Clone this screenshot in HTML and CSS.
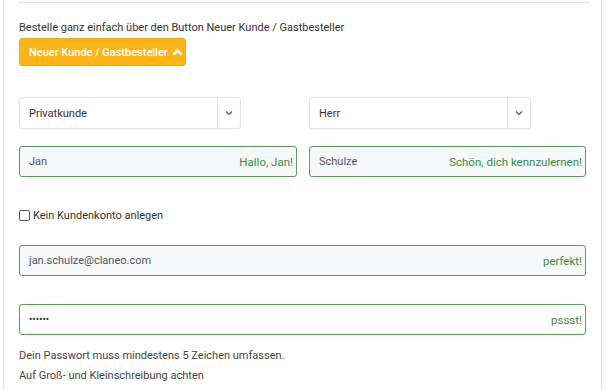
FILE: index.html
```html
<!DOCTYPE html>
<html lang="de">
<head>
    <meta charset="UTF-8">
    <title>Kasse</title>
<link rel="stylesheet" href="styles.css">
</head>
<body>
    <div class="panel">
        <hr class="top-line">
        <p class="intro">Bestelle ganz einfach über den Button Neuer Kunde / Gastbesteller</p>
        <button class="guest-btn" type="button">Neuer Kunde / Gastbesteller
            <svg width="11" height="8" viewBox="0 0 11 8"><path d="M1.5 6.5 L5.5 2.5 L9.5 6.5" fill="none" stroke="#fff" stroke-width="2.6"/></svg>
        </button>

        <div class="row selects">
            <div class="col">
                <div class="select">
                    <span class="select-value">Privatkunde</span>
                    <span class="select-arrow"><svg width="8" height="6" viewBox="0 0 8 6"><path d="M1 1.5 L4 4.5 L7 1.5" fill="none" stroke="#555" stroke-width="1.2"/></svg></span>
                </div>
            </div>
            <div class="col">
                <div class="select">
                    <span class="select-value">Herr</span>
                    <span class="select-arrow"><svg width="8" height="6" viewBox="0 0 8 6"><path d="M1 1.5 L4 4.5 L7 1.5" fill="none" stroke="#555" stroke-width="1.2"/></svg></span>
                </div>
            </div>
        </div>

        <div class="row names">
            <div class="col">
                <div class="field valid">
                    <span class="field-value">Jan</span>
                    <span class="field-hint">Hallo, Jan!</span>
                </div>
            </div>
            <div class="col">
                <div class="field valid">
                    <span class="field-value">Schulze</span>
                    <span class="field-hint">Schön, dich kennzulernen!</span>
                </div>
            </div>
        </div>

        <label class="check"><span class="box"></span>Kein Kundenkonto anlegen</label>

        <div class="field valid email">
            <span class="field-value">jan.schulze@claneo.com</span>
            <span class="field-hint">perfekt!</span>
        </div>

        <div class="field valid password">
            <span class="field-value dots">&bull;&bull;&bull;&bull;&bull;&bull;</span>
            <span class="field-hint">pssst!</span>
        </div>

        <p class="help">Dein Passwort muss mindestens 5 Zeichen umfassen.<br>Auf Groß- und Kleinschreibung achten</p>
    </div>
</body>
</html>
```

FILE: styles.css
```css
body{
    margin: 0;
    font-family: Roboto, "Liberation Sans", sans-serif;
    font-size: 11px;
    color: #333;
    background: #fff;
}
.panel{
    margin-left: 3px;
    width: 567px;
    padding: 2px 15px 10px 15px;
    border-left: 1px solid #e2e2e2;
    border-right: 1px solid #e2e2e2;
    height: 378px;
}
.top-line{
    margin: 0 -4px 0 -1px;
    border: 0;
    border-top: 1px solid #e4e4e4;
}
.intro{
    margin: 17px 0 0 0;
    line-height: 16px;
    color: #333;
}
.guest-btn{
    margin-top: 2px;
    height: 28px;
    width: 167px;
    padding: 0 0 0 9px;
    border: 1px solid #f0ab0a;
    border-radius: 3px;
    background-color: #fbb516;
    color: #fff;
    font-family: Roboto, "Liberation Sans", sans-serif;
    font-size: 11px;
    font-weight: 500;
    white-space: nowrap;
    text-align: left;
    display: flex;
    align-items: center;
    gap: 4px;
}
.row{
    display: grid;
    grid-template-columns: 278px 277px;
    column-gap: 12px;
}
.selects{
    margin-top: 31px;
}
.select{
    width: 220px;
    height: 30px;
    border: 1px solid #e3e3e3;
    border-radius: 3px;
    display: flex;
    align-items: center;
    background: #fff;
}
.select-value{
    flex: 1;
    padding-left: 9px;
    color: #333;
}
.select-arrow{
    width: 22px;
    height: 30px;
    border-left: 1px solid #e3e3e3;
    display: flex;
    align-items: center;
    justify-content: center;
}
.names{
    margin-top: 17px;
}
.field{
    height: 29px;
    border: 1px solid #d5d5d5;
    border-radius: 3px;
    display: flex;
    align-items: center;
    justify-content: space-between;
    padding: 0 3px 0 9px;
    background: #f7f8fa;
}
.field.valid{
    border-color: #5d9b5d;
}
.field-value{
    color: #555;
}
.field-hint{
    color: #3f8a3f;
    font-size: 11.5px;
}
.check{
    display: flex;
    align-items: center;
    gap: 3px;
    margin-top: 30px;
    height: 16px;
    color: #333;
}
.box{
    width: 9px;
    height: 9px;
    border: 1px solid #555;
    border-radius: 2px;
    background: #fff;
}
.email{
    margin-top: 22px;
}
.password{
    margin-top: 28px;
    background: #fff;
}
.dots{
    font-size: 10px;
    letter-spacing: 0;
    color: #333;
}
.help{
    margin: 11px 0 0 0;
    line-height: 20px;
    color: #444;
}
```
